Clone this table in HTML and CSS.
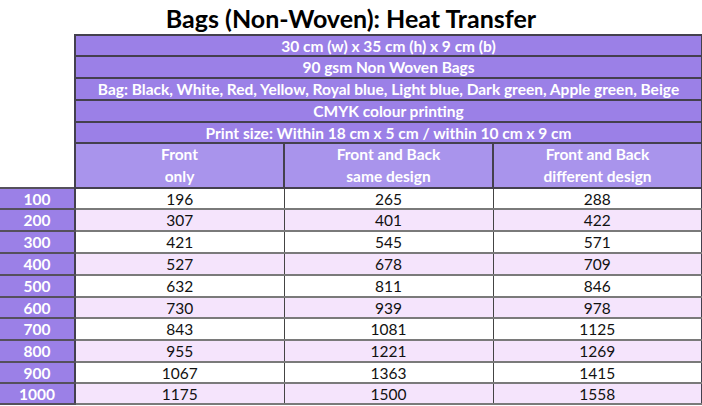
FILE: index.html
```html
<!DOCTYPE html>
<html>
<head>
<meta charset="utf-8">
<link rel="stylesheet" href="styles.css">
</head>
<body>
<h1 class="title">Bags (Non-Woven): Heat Transfer</h1>
<table class="price">
  <colgroup>
    <col class="c-qty"><col class="c-val"><col class="c-val"><col class="c-val">
  </colgroup>
  <tr class="spec short"><td class="blank"></td><td colspan="3">30 cm (w) x 35 cm (h) x 9 cm (b)</td></tr>
  <tr class="spec"><td class="blank"></td><td colspan="3">90 gsm Non Woven Bags</td></tr>
  <tr class="spec"><td class="blank"></td><td colspan="3">Bag: Black, White, Red, Yellow, Royal blue, Light blue, Dark green, Apple green, Beige</td></tr>
  <tr class="spec"><td class="blank"></td><td colspan="3">CMYK colour printing</td></tr>
  <tr class="spec short"><td class="blank"></td><td colspan="3">Print size: Within 18 cm x 5 cm / within 10 cm x 9 cm</td></tr>
  <tr class="sub"><td class="blank"></td><td>Front<br>only</td><td>Front and Back<br>same design</td><td>Front and Back<br>different design</td></tr>
  <tr class="row short"><th>100</th><td>196</td><td>265</td><td>288</td></tr>
  <tr class="row alt"><th>200</th><td>307</td><td>401</td><td>422</td></tr>
  <tr class="row"><th>300</th><td>421</td><td>545</td><td>571</td></tr>
  <tr class="row alt"><th>400</th><td>527</td><td>678</td><td>709</td></tr>
  <tr class="row"><th>500</th><td>632</td><td>811</td><td>846</td></tr>
  <tr class="row alt short"><th>600</th><td>730</td><td>939</td><td>978</td></tr>
  <tr class="row"><th>700</th><td>843</td><td>1081</td><td>1125</td></tr>
  <tr class="row alt"><th>800</th><td>955</td><td>1221</td><td>1269</td></tr>
  <tr class="row short"><th>900</th><td>1067</td><td>1363</td><td>1415</td></tr>
  <tr class="row alt short"><th>1000</th><td>1175</td><td>1500</td><td>1558</td></tr>
</table>
</body>
</html>
```
FILE: styles.css
```css
html, body {
  margin: 0;
  padding: 0;
  background: #ffffff;
}
body {
  width: 702px;
  height: 406px;
  overflow: hidden;
  font-family: Lato, "Open Sans", sans-serif;
}
.title {
  margin: 0;
  height: 34px;
  line-height: 36px;
  font-size: 25px;
  font-weight: 700;
  text-align: center;
  color: #000;
}
.price {
  width: 701px;
  table-layout: fixed;
  border-collapse: collapse;
  font-size: 15.5px;
}
.c-qty { width: 75px; }
.c-val { width: 209px; }
.price td, .price th {
  padding: 0;
  text-align: center;
  vertical-align: middle;
  white-space: nowrap;
}
.spec { height: 22px; }
.sub { height: 43px; }
.row { height: 22px; }
.spec.short, .row.short { height: 21px; }
.spec td {
  line-height: 18px;
  background: #9b80e7;
  color: #fff;
  font-weight: 700;
  border: 2px solid #44404e;
}
.spec td.blank, .sub td.blank {
  background: #fff;
  border: none;
  border-right: 2px solid #44404e;
}
.sub td {
  line-height: 21.5px;
  background: #a994ec;
  color: #fff;
  font-weight: 700;
  border: 2px solid #44404e;
}
.row th {
  line-height: 18px;
  background: #9b80e7;
  color: #fff;
  font-weight: 700;
  border-top: 2px solid #55505c;
  border-bottom: 2px solid #55505c;
  border-right: 2px solid #44404e;
}
.row td {
  line-height: 18px;
  background: #fff;
  color: #111;
  border-top: 2px solid #7a7a7a;
  border-bottom: 2px solid #7a7a7a;
  border-left: 1px solid #444;
  border-right: 1px solid #444;
}
.row.alt td {
  background: #f5e4fc;
}
.row td:last-child {
  border-right: 2px solid #44404e;
}
```
